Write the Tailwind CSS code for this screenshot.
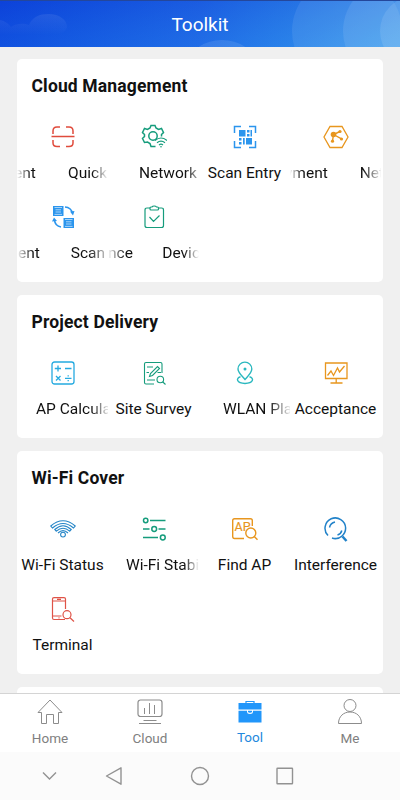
<!DOCTYPE html>
<html lang="en">
<head>
    <meta charset="UTF-8">
    <meta name="viewport" content="width=device-width, initial-scale=1.0">
    <title>Toolkit</title>
    <script src="https://cdn.jsdelivr.net/npm/@tailwindcss/browser@4"></script>
</head>
<body class="bg-[#f0f0f0] font-[Roboto,sans-serif] text-[#111]">
    <div class="w-[400px] h-[800px] flex flex-col overflow-hidden">
        <!-- Header -->
        <header class="relative h-[47px] shrink-0 overflow-hidden flex items-center justify-center border-t border-[#24479b] bg-linear-to-r from-[#0b40da] via-[#1e63e3] to-[#3f9dec]">
            <svg class="absolute inset-0" width="400" height="47" viewBox="0 1 400 47" fill="#fff">
                <defs>
                    <linearGradient id="shade" x1="0" y1="0" x2="0" y2="1">
                        <stop offset="0" stop-color="#1246d8" stop-opacity=".25"/>
                        <stop offset="1" stop-color="#2a98f5" stop-opacity=".2"/>
                    </linearGradient>
                    <linearGradient id="cloud" x1="0" y1="0" x2="0" y2="1">
                        <stop offset="0" stop-color="#fff" stop-opacity=".08"/>
                        <stop offset="1" stop-color="#fff" stop-opacity="0"/>
                    </linearGradient>
                </defs>
                <rect y="1" width="400" height="47" fill="url(#shade)"/>
                <path d="M0 20C5 21 9 24 11 27C16 23 24 23 29 25C32 17 40 14 48 14C60 14 67 20 67 27C66 33 58 35 50 35H0Z" fill="url(#cloud)"/>
                <ellipse cx="222" cy="62" rx="32" ry="22" opacity=".1"/>
                <circle cx="347" cy="31" r="55" opacity=".08"/>
                <circle cx="394" cy="31" r="51" opacity=".09"/>
                <circle cx="415" cy="31" r="35" opacity=".1"/>
            </svg>
            <h1 class="relative pt-px text-[19px] leading-6 text-white">Toolkit</h1>
        </header>

        <!-- Tool groups -->
        <main class="flex-1 min-h-0 overflow-hidden px-[17px] pt-[11.5px] flex flex-col gap-[12.5px]">
            <section class="h-[223.5px] shrink-0 bg-white rounded-[5px]">
                <h2 class="h-[53.5px] pt-[15px] pl-[14.5px] text-[17.5px] leading-6 font-bold tracking-[0.15px]">Cloud Management</h2>
                <div class="w-[364px] grid grid-cols-4 text-[15.5px] leading-5">
                    <div class="h-20 min-w-0 flex flex-col items-center pt-3">
                        <svg width="26" height="26" viewBox="0 0 26 26" fill="none" stroke="#e04b3c" stroke-width="1.5">
                            <path d="M3 10V7Q3 3 7 3H10M16 3H19Q23 3 23 7V10M3 16V19Q3 22.500 7 22.500H10M16 22.500H19Q23 22.500 23 19V16M1.500 12.500H24.500"/>
                        </svg>
                        <div class="mt-[13px] w-full flex justify-between overflow-hidden whitespace-nowrap pr-px [mask-image:linear-gradient(to_right,transparent,black_14px,black_75px,transparent)]"><span class="-ml-[3px]">ent</span><span>Quick</span></div>
                    </div>
                    <div class="h-20 min-w-0 flex flex-col items-center pt-3">
                        <svg width="26" height="26" viewBox="0 0 26 26" fill="none" stroke="#159c7c" stroke-width="1.500">
                            <path d="M14.500 22.500H10L9 19.500L6.500 18L3.500 18.500L1.500 14.500L3.500 12.500V10.500L1.500 8.500L3.500 4.500L6.500 5.500L9 4L10 1.500H14L15 4L17.500 5.500L20.500 4.500L22.500 8.500L20.500 10.500V12.500"/>
                            <circle cx="12" cy="12" r="4.200"/>
                            <path d="M14 16.500Q20 11.500 26 16.500M16 18.800Q20 15.500 24 18.800M18 21Q20 19.400 22 21" stroke-width="1.200"/>
                            <circle cx="20" cy="22.700" r=".8" fill="#159c7c" stroke="none"/>
                        </svg>
                        <div class="mt-[13px] w-full pl-[31px] whitespace-nowrap [mask-image:linear-gradient(to_right,black_77px,transparent_98px)]">Network</div>
                    </div>
                    <div class="h-20 min-w-0 flex flex-col items-center pt-3">
                        <svg width="26" height="26" viewBox="0 0 26 26" fill="none" stroke="#2b95ed" stroke-width="1.500">
                            <path d="M2.500 9V2.500H9M17 2.500H23.500V9M23.500 17V23.500H17M9 23.500H2.500V17"/>
                            <path d="M7 6h6.500v6.500H7zM14 14h6v6.500h-6zM15 6h2.500v2.500H15zM15 10h2.500v2.500H15zM18.500 6h1.500v6.500h-1.500zM7 14h2.500v2.500H7zM7 18h2.500v2.500H7zM11 14h1.700v6.500H11z" fill="#2b95ed" stroke="none"/>
                        </svg>
                        <div class="mt-[13px] whitespace-nowrap">Scan Entry</div>
                    </div>
                    <div class="h-20 min-w-0 flex flex-col items-center pt-3">
                        <svg width="26" height="26" viewBox="0 0 26 26" fill="none" stroke="#e8961e" stroke-width="1.300">
                            <path d="M7 2.500H19L25 13L19 23.500H7L1 13Z"/>
                            <path d="M17 7.500L10.500 10.500L9.500 17M10.500 10.500L18.500 14.800" stroke-width="1.400"/>
                            <g fill="#e8961e" stroke="none"><circle cx="10.500" cy="10.500" r="2.800"/><circle cx="17" cy="7.500" r="1.600"/><circle cx="18.500" cy="15" r="1.600"/><circle cx="9.500" cy="17.200" r="1.600"/></g>
                        </svg>
                        <div class="mt-[13px] w-full flex justify-between overflow-hidden whitespace-nowrap [mask-image:linear-gradient(to_right,transparent,black_12px,black_73px,transparent_92px)]"><span class="-ml-[5px]">yment</span><span class="-mr-[3px]">Net</span></div>
                    </div>
                    <div class="h-20 min-w-0 flex flex-col items-center pt-3">
                        <svg width="26" height="26" viewBox="0 0 26 26" fill="none" stroke="#2b95ed">
                            <g fill="#2b95ed" stroke="none"><rect x="3" y="2" width="10.500" height="10"/><rect x="13.500" y="14" width="10.500" height="10"/></g>
                            <path d="M4.500 3.500h7.500M5.500 5.800h5.500M5.500 8h5.500M4.500 10.400h7.500M15 15.500h7.500M16 17.800h5.500M16 20h5.500M15 22.400h7.500" stroke="#fff" stroke-width=".6"/>
                            <path d="M15 3Q21 3.500 22.500 9M11 23Q5 22 4.500 16" stroke-width="1.600"/>
                            <path d="M20 7.500L24.500 7L23 11.500ZM2 17.500L4 13.500L7 17Z" fill="#2b95ed" stroke="none"/>
                        </svg>
                        <div class="mt-[13px] w-full flex justify-between overflow-hidden whitespace-nowrap pr-[3px] [mask-image:linear-gradient(to_right,transparent,black_16px,black_72px,transparent_94px)]"><span class="ml-px">ent</span><span>Scan</span></div>
                    </div>
                    <div class="h-20 min-w-0 flex flex-col items-center pt-3">
                        <svg width="26" height="26" viewBox="0 0 26 26" fill="none" stroke="#159c7c" stroke-width="1.200">
                            <path d="M9 4H6Q4 4 4 6V21.500Q4 23.500 6 23.500H20.500Q22.500 23.500 22.500 21.500V6Q22.500 4 20.500 4H17.500"/>
                            <path d="M11 3Q11.500 2 13.200 2T15.500 3H16.500Q17.500 3 17.500 4V5Q17.500 6 16.500 6H10Q9 6 9 5V4Q9 3 10 3ZM8.500 13L12.500 17.500L18.500 11.500"/>
                        </svg>
                        <div class="mt-[13px] w-full flex justify-between overflow-hidden whitespace-nowrap [mask-image:linear-gradient(to_right,transparent,black_16px,black_76px,transparent)]"><span>nce</span><span class="-mr-px">Devic</span></div>
                    </div>
                </div>
            </section>

            <section class="h-[143.5px] shrink-0 bg-white rounded-[5px]">
                <h2 class="h-[53.5px] pt-[15px] pl-[14.5px] text-[17.5px] leading-6 font-bold tracking-[0.15px]">Project Delivery</h2>
                <div class="w-[364px] grid grid-cols-4 text-[15.5px] leading-5">
                    <div class="h-20 min-w-0 flex flex-col items-center pt-3">
                        <svg width="26" height="26" viewBox="0 0 26 26" fill="none" stroke="#25aae0" stroke-width="1.300">
                            <rect x="2" y="2" width="22" height="22" rx="2.500"/>
                            <path d="M4.800 8.500H11M8 5.500V11.500M15 8.500H21.500M6 16L10.500 20.500M10.500 16L6 20.500M15 18.300H21.500"/>
                            <path d="M18.200 15.300V16.600M18.200 20V21.300"/>
                        </svg>
                        <div class="mt-[13px] w-full pl-[19px] whitespace-nowrap [mask-image:linear-gradient(to_right,black_74px,transparent_93px)]">AP Calcula</div>
                    </div>
                    <div class="h-20 min-w-0 flex flex-col items-center pt-3">
                        <svg width="26" height="26" viewBox="0 0 26 26" fill="none" stroke="#159c7c" stroke-width="1.100">
                            <path d="M13 24H5Q3.500 24 3.500 22.500V4Q3.500 2.500 5 2.500H19.500Q21 2.500 21 4V13"/>
                            <path d="M6 7H12M5.500 12.500H8M16.500 12.500H20M6 20H14"/>
                            <path d="M8.500 16.500L9.500 13.500L16.500 6.500L18.500 8.500L11.500 15.500Z"/>
                            <circle cx="19.300" cy="19.500" r="3.300"/><path d="M21.800 22L24.500 24.500"/>
                        </svg>
                        <div class="mt-[13px] whitespace-nowrap">Site Survey</div>
                    </div>
                    <div class="h-20 min-w-0 flex flex-col items-center pt-3">
                        <svg width="26" height="26" viewBox="0 0 26 26" fill="none" stroke="#2bb8bf" stroke-width="1.400">
                            <path d="M13 19.500C9.500 15.500 6 12.500 6 9A6.800 6.800 0 0 1 19.800 9C19.800 12.500 16.500 15.500 13 19.500Z"/>
                            <circle cx="13" cy="9" r=".8" fill="#2bb8bf"/>
                            <path d="M8.500 16.700C3.500 18 4.500 23.500 13 23.500S22.500 18 17.500 16.700"/>
                        </svg>
                        <div class="mt-[13px] w-full pl-[24px] whitespace-nowrap [mask-image:linear-gradient(to_right,black_70px,transparent_93px)]">WLAN Pla</div>
                    </div>
                    <div class="h-20 min-w-0 flex flex-col items-center pt-3">
                        <svg width="26" height="26" viewBox="0 0 26 26" fill="none" stroke="#e8961e" stroke-width="1.300">
                            <path d="M2.500 3H24V18.500H2.500ZM13.200 18.500V23M7.500 23H19.500"/>
                            <path d="M4.500 15.500L8 11L10.500 15.500L14.500 8L16.500 12L21.500 6"/>
                        </svg>
                        <div class="mt-[13px] whitespace-nowrap">Acceptance</div>
                    </div>
                </div>
            </section>

            <section class="h-[223.5px] shrink-0 bg-white rounded-[5px]">
                <h2 class="h-[53.5px] pt-[15px] pl-[14.5px] text-[17.5px] leading-6 font-bold tracking-[0.15px]">Wi-Fi Cover</h2>
                <div class="w-[364px] grid grid-cols-4 text-[15.5px] leading-5">
                    <div class="h-20 min-w-0 flex flex-col items-center pt-3">
                        <svg width="26" height="26" viewBox="0 0 26 26" fill="none" stroke="#2585c7" stroke-width="1.100">
                            <path d="M.8 10Q13 -.5 25.200 10L23.500 12Q13 3 2.500 12ZM4.800 13.500Q13 6 21.200 13.500L19.700 15.200Q13 9.200 6.300 15.200Z"/>
                            <path d="M8 17Q13 12.300 18 17"/>
                            <circle cx="13" cy="18.600" r="2.400"/>
                        </svg>
                        <div class="mt-[13px] whitespace-nowrap">Wi-Fi Status</div>
                    </div>
                    <div class="h-20 min-w-0 flex flex-col items-center pt-3">
                        <svg width="26" height="26" viewBox="0 0 26 26" fill="none" stroke="#159c7c" stroke-width="1.500">
                            <path d="M9 4.500H24.500M2 13H8.500M17.500 13H24.500M2 21.500H17"/>
                            <circle cx="4.700" cy="4.500" r="2.200"/><circle cx="13.200" cy="13" r="2.400"/><circle cx="21.800" cy="21.500" r="2.400"/>
                        </svg>
                        <div class="mt-[13px] w-full pl-[18px] whitespace-nowrap [mask-image:linear-gradient(to_right,black_76px,transparent)]">Wi-Fi Stabi</div>
                    </div>
                    <div class="h-20 min-w-0 flex flex-col items-center pt-3">
                        <svg width="26" height="26" viewBox="0 0 26 26" fill="none" stroke="#e8961e" stroke-width="1.400">
                            <path d="M12 22.500H2.500Q.7 22.500 .7 20.500V4.500Q.7 2.700 2.500 2.700H18.500Q20.300 2.700 20.300 4.500V10"/>
                            <circle cx="18.800" cy="17" r="5"/><path d="M22.300 20.600L25.500 23.800"/>
                            <text x="2.500" y="14.500" font-size="12.500" textLength="16" lengthAdjust="spacingAndGlyphs" fill="#e8961e" stroke="#e8961e" stroke-width=".2">AP</text>
                        </svg>
                        <div class="mt-[13px] whitespace-nowrap">Find AP</div>
                    </div>
                    <div class="h-20 min-w-0 flex flex-col items-center pt-3">
                        <svg width="26" height="26" viewBox="0 0 26 26" fill="none" stroke="#2182c9" stroke-width="1.500">
                            <path d="M5 19.500A10.300 10.300 0 1 1 9 22M11.500 22.700Q16 23 19.500 19.800"/>
                            <path d="M6.500 11.500Q7.500 7 12 6M18.800 14.500Q18 18 14.500 19"/>
                            <path d="M19.500 20.500L23.500 25" stroke-width="2.500"/>
                        </svg>
                        <div class="mt-[13px] whitespace-nowrap">Interference</div>
                    </div>
                    <div class="h-20 min-w-0 flex flex-col items-center pt-3">
                        <svg width="26" height="26" viewBox="0 0 26 26" fill="none" stroke="#df5347" stroke-width="1.200">
                            <path d="M15 23.500H4Q2.500 23.500 2.500 22V3Q2.500 1.700 4 1.700H14Q15.500 1.700 15.500 3V13M2.500 5H15.500M3 20H11.500M7 3.400H11M8.500 21.800H9.500"/>
                            <circle cx="17" cy="18.700" r="4"/><path d="M20 21.800L24 25.500"/>
                        </svg>
                        <div class="mt-[13px] whitespace-nowrap">Terminal</div>
                    </div>
                </div>
            </section>

            <section class="h-20 shrink-0 bg-white rounded-[5px]"></section>
        </main>

        <!-- Tab bar -->
        <nav class="h-[59px] shrink-0 grid grid-cols-4 bg-white border-t border-[#d4d4d4] text-[13.5px] leading-4 text-[#808080]">
            <div class="flex flex-col items-center pt-[4px]">
                <svg width="28" height="28" viewBox="0 0 28 28" fill="none" stroke="#8c8c8c">
                    <path d="M14 2L26 14.500H22.500V25.500H17.500V16.500H10.500V25.500H5.500V14.500H2Z" stroke-linejoin="round"/>
                </svg>
                <span class="mt-[4px]">Home</span>
            </div>
            <div class="flex flex-col items-center pt-[4px]">
                <svg width="28" height="28" viewBox="0 0 28 28" fill="none" stroke="#8c8c8c">
                    <rect x="2" y="2" width="24" height="16.500" rx="2.500" stroke-width="1.200"/>
                    <path d="M8.500 10V16M13.500 5V16M18.500 7V16M7.500 22.500H20.500M3 25.500H25"/>
                </svg>
                <span class="mt-[4px]">Cloud</span>
            </div>
            <div class="flex flex-col items-center pt-[4px] text-[#2288dd]">
                <svg width="28" height="28" viewBox="0 0 28 28" fill="#2196fa">
                    <path d="M10 5V3.500H18V5" fill="none" stroke="#2196fa" stroke-width="1.200"/>
                    <path d="M2.500 5H25.500V11.500H2.500ZM2.500 12.700H11V13.500Q11 16 14 16T17 13.500V12.700H25.500V24.500H2.500Z"/>
                    <path d="M12 12.700H16V13.500Q16 14.800 14 14.800T12 13.500Z"/>
                </svg>
                <span class="mt-[3px]">Tool</span>
            </div>
            <div class="flex flex-col items-center pt-[4px]">
                <svg width="28" height="28" viewBox="0 0 28 28" fill="none" stroke="#8c8c8c">
                    <circle cx="14" cy="7.500" r="6"/>
                    <path d="M2.500 25.500C2.500 18.500 7.500 14 14 14S25.500 18.500 25.500 25.500Z"/>
                </svg>
                <span class="mt-[4px]">Me</span>
            </div>
        </nav>

        <!-- System navigation -->
        <div class="h-12 shrink-0 bg-[#fbfbfb] flex items-center pl-[40px] gap-[44px]">
            <svg width="20" height="20" viewBox="0 0 20 20" fill="none" stroke="#929292" stroke-width="1.400"><path d="M3 6.500L9.500 13L16 6.500"/></svg>
            <svg width="20" height="20" viewBox="0 0 20 20" fill="none" stroke="#929292" stroke-width="1.400"><path d="M17 1.800V18.200L2.500 10Z" stroke-linejoin="round"/></svg>
            <svg class="ml-[22px]" width="20" height="20" viewBox="0 0 20 20" fill="none" stroke="#929292" stroke-width="1.400"><circle cx="10" cy="10" r="8.500"/></svg>
            <svg class="ml-[20px]" width="20" height="20" viewBox="0 0 20 20" fill="none" stroke="#929292" stroke-width="1.400"><rect x="3" y="2.300" width="15.500" height="15.500" rx=".5"/></svg>
        </div>
    </div>
</body>
</html>
